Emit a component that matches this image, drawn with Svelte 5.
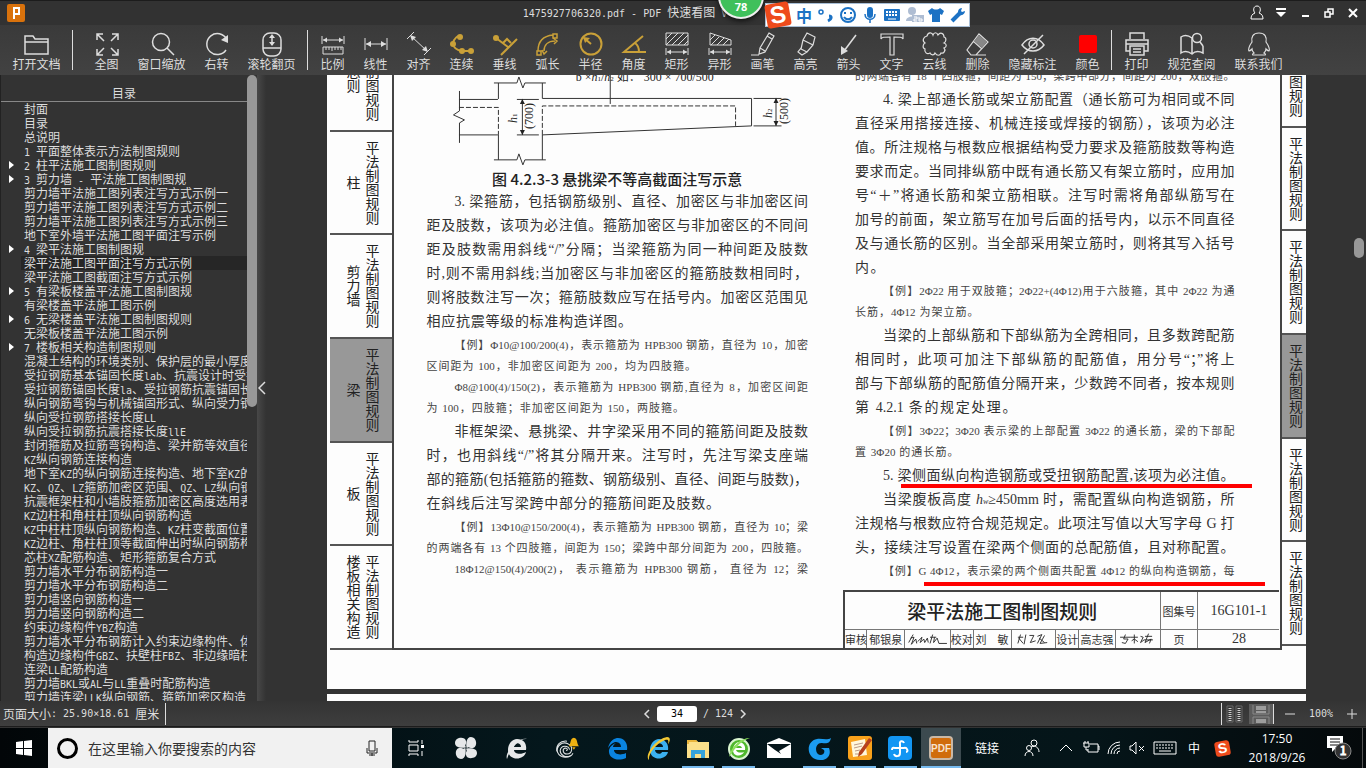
<script>
  const tools = [
    { label: "打开文档", icon: '<path d="M1 23V5h8l2 3h13v15zM1 11h23"/>' },
    { sep: "wide" },
    { label: "全图", icon: '<path d="M10 10L3 3m0 6V3h6M17 10l7-7m-6 0h6v6M10 17l-7 7m0-6v6h6M17 17l7 7m-6 0h6v-6"/>' },
    { label: "窗口缩放", icon: '<circle cx="12" cy="11" r="8.5"/><path d="M18 17l7 7"/>' },
    { label: "右转", icon: '<path d="M22 19a10.500 10.500 0 1 1 .5-11"/><path d="M24 4v8l-7-3z" fill="#ddd" stroke="none"/>' },
    { label: "滚轮翻页", icon: '<rect x="4" y="2" width="18" height="23" rx="7"/><path d="M4 17h18M13 5v9"/><path d="M10 7l3-4 3 4zM10 11l3 4 3-4z" fill="#ddd" stroke="none"/>' },
    { sep: "thin" },
    { label: "比例", icon: '<path d="M2 5v8M24 5v8M3 9h20" stroke-width="1"/><path d="M3 9l4-2.500v5zM23 9l-4-2.500v5z" fill="#ddd" stroke="none"/><path d="M3 16h20v7H3zM6 16v3M9 16v3M12 16v4M15 16v3M18 16v3M21 16v3" stroke-width="1"/>' },
    { label: "线性", icon: '<path d="M2 7v12M24 7v12M3 13h20" stroke-width="1"/><path d="M3 13l5-3v6zM23 13l-5-3v6z" fill="#ddd" stroke="none"/>' },
    { label: "对齐", icon: '<path d="M1 8l7-7M18 24l7-7M5 5l16 15" stroke-width="1"/><path d="M4 4l6 2-4 4zM22 21l-6-2 4-4z" fill="#ddd" stroke="none"/>' },
    { label: "连续", gold: true, icon: '<path d="M9 5c-7 5-7 13 4 15h10"/><g fill="#c9a038" stroke="none"><circle cx="11" cy="6" r="3"/><circle cx="4" cy="13" r="3"/><circle cx="13" cy="20" r="3"/><circle cx="22" cy="20" r="3"/></g>' },
    { label: "垂线", gold: true, icon: '<path d="M4 7l12 9M9 24L25 8M11 12l4-4 4 4"/><circle cx="4" cy="7" r="3" fill="#c9a038" stroke="none"/>' },
    { label: "弧长", gold: true, icon: '<path d="M3 20c0-10 5-15 15-16M9 20c0-6 4-10 11-10M2 20h4v4H2zM18 3h4v4h-4zM7 19l2 4 3-3M18 7l4 3-3 3" stroke-width="1.500"/>' },
    { label: "半径", gold: true, icon: '<circle cx="13" cy="13" r="10.500"/><path d="M13 13L6 7"/><path d="M5 6l7 1-5 5z" fill="#c9a038" stroke="none"/>' },
    { label: "角度", gold: true, icon: '<path d="M22 5L3 21h22M14 12c3 2 4 5 4 9"/>' },
    { label: "矩形", icon: '<path d="M2 2h22v12H2zM2 8l6-6M2 14L14 2M8 14L20 2M14 14L24 4M20 14l4-4M2 17v7M24 17v7M3 21h20" stroke-width="1"/><path d="M3 21l4-2.500v5zM23 21l-4-2.500v5z" fill="#ddd" stroke="none"/>' },
    { label: "异形", icon: '<path d="M3 2l21 7v5H3zM3 9l5-5M4 14l8-8M10 14l7-7M16 14l6-6M2 17v7M24 17v7M3 21h20" stroke-width="1"/><path d="M3 21l4-2.500v5zM23 21l-4-2.500v5z" fill="#ddd" stroke="none"/>' },
    { label: "画笔", icon: '<path d="M19 2l5 3-9 16-6 2 1-6zM17 5l5 3M10 17l5 3M1 24h8" stroke-width="1.200"/>' },
    { label: "高亮", icon: '<path d="M14 2l8 4-2 8-6 7-6-3 2-9zM10 9l10 5M8 17l-3 4 4 3 5-3" stroke-width="1.200"/>' },
    { label: "箭头", icon: '<path d="M20 4L8 20"/><path d="M5 24V15l7 5z" fill="#ddd" stroke="none"/>' },
    { label: "文字", icon: '<path d="M2 8V3h22v5c-1-2-3-2-9-2v18h-4V6C5 6 3 6 2 8z" stroke-width="1.200"/>' },
    { label: "云线", icon: '<path d="M5 5c1-4 5-4 6-1 1-3 4-3 5 0 2-3 6-2 6 2 3 1 2 5 0 6 3 1 3 4 0 5 2 2 0 6-3 5-1 3-4 3-6 0-1 3-4 2-5 0-3 2-6-1-5-4-3-1-2-5 0-6-3-2-2-6 2-7z" stroke-width="1.200"/>' },
    { label: "删除", icon: '<path d="M14 3l9 8-12 13H6l-4-5zM8 10l9 8M11 24h10" stroke-width="1.200"/><path d="M14 4l8 7-5 6-8-7z" fill="#888" stroke="none"/>' },
    { label: "隐藏标注", icon: '<path d="M2 14c6-9 16-9 22 0-6 8-16 8-22 0zM4 23L23 4"/><circle cx="13" cy="13" r="4"/>' },
    { label: "颜色", icon: '<rect x="4" y="4" width="18" height="18" rx="2" fill="#f00" stroke="none"/>' },
    { sep: "thin" },
    { label: "打印", icon: '<path d="M6 8V2h14v6M6 20H2V9h22v11h-4M2 13h22M6 15h14v9H6zM9 18h8M9 21h8"/>' },
    { label: "规范查阅", icon: '<path d="M13 7C9 4 5 4 2 6v16c3-2 7-2 11 1 3-3 7-3 11-1v-7M13 7v15"/><circle cx="18" cy="7" r="4.500"/><path d="M21 11l3 4"/>' },
    { label: "联系我们", icon: '<path d="M13 2c-6 0-8 4-7 9-3 4-4 8-3 9 1 0 2-1 3-2 0 2 1 3 2 4-2 1-2 2 0 2h10c2 0 2-1 0-2 1-1 2-2 2-4 1 1 2 2 3 2 1-1 0-5-3-9 1-5-1-9-7-9z" stroke-width="1.200"/>' }
  ];

  const toc = [
    "封面", "目录", "总说明", "1 平面整体表示方法制图规则", ">2 柱平法施工图制图规则",
    ">3 剪力墙 - 平法施工图制图规", "剪力墙平法施工图列表注写方式示例一",
    "剪力墙平法施工图列表注写方式示例二", "剪力墙平法施工图列表注写方式示例三",
    "地下室外墙平法施工图平面注写示例", ">4 梁平法施工图制图规", "梁平法施工图平面注写方式示例",
    "梁平法施工图截面注写方式示例", ">5 有梁板楼盖平法施工图制图规", "有梁楼盖平法施工图示例",
    ">6 无梁楼盖平法施工图制图规则", "无梁板楼盖平法施工图示例", ">7 楼板相关构造制图规则",
    "混凝土结构的环境类别、保护层的最小厚度", "受拉钢筋基本锚固长度lab、抗震设计时受拉",
    "受拉钢筋锚固长度la、受拉钢筋抗震锚固长度", "纵向钢筋弯钩与机械锚固形式、纵向受力钢筋",
    "纵向受拉钢筋搭接长度LL", "纵向受拉钢筋抗震搭接长度llE", "封闭箍筋及拉筋弯钩构造、梁并筋等效直径",
    "KZ纵向钢筋连接构造", "地下室KZ的纵向钢筋连接构造、地下室KZ的箍", "KZ、QZ、LZ箍筋加密区范围、QZ、LZ纵向钢筋",
    "抗震框架柱和小墙肢箍筋加密区高度选用表", "KZ边柱和角柱柱顶纵向钢筋构造", "KZ中柱柱顶纵向钢筋构造、KZ柱变截面位置",
    "KZ边柱、角柱柱顶等截面伸出时纵向钢筋构造", "芯柱XZ配筋构造、矩形箍筋复合方式",
    "剪力墙水平分布钢筋构造一", "剪力墙水平分布钢筋构造二", "剪力墙竖向钢筋构造一", "剪力墙竖向钢筋构造二",
    "约束边缘构件YBZ构造", "剪力墙水平分布钢筋计入约束边缘构件、体积", "构造边缘构件GBZ、扶壁柱FBZ、非边缘暗柱",
    "连梁LL配筋构造", "剪力墙BKL或AL与LL重叠时配筋构造", "剪力墙连梁LLK纵向钢筋、箍筋加密区构造"
  ];

  // latin letters and digits get their own half-width font
  const runs = text => text.split(/([\x20-\x7e×]+)/).filter(Boolean);
  const isLatin = run => /^[\x20-\x7e×]/.test(run);

  const tabs = [
    { name: "总则" }, { name: "柱" }, { name: "剪力墙" },
    { name: "梁", current: true }, { name: "板" }, { name: "楼板相关构造" }
  ];

  // column widths of the title block, as shares of the row
  const cells = [23, 38, 46, 23, 38, 45, 23, 37, 45, 38, 82];
  const total = cells.reduce((a, b) => a + b);

  // in: first line of a paragraph, end: room left at the line's right side
  const left = [
    { lines: [
      { t: "3. 梁箍筋，包括钢筋级别、直径、加密区与非加密区间", in: true },
      { t: "距及肢数，该项为必注值。箍筋加密区与非加密区的不同间" },
      { t: "距及肢数需用斜线“/”分隔；当梁箍筋为同一种间距及肢数" },
      { t: "时,则不需用斜线;当加密区与非加密区的箍筋肢数相同时，" },
      { t: "则将肢数注写一次；箍筋肢数应写在括号内。加密区范围见" },
      { t: "相应抗震等级的标准构造详图。", end: 176 }
    ] },
    { small: true, lines: [
      { t: "【例】Φ10@100/200(4)，表示箍筋为 HPB300 钢筋，直径为 10，加密", in: true },
      { t: "区间距为 100，非加密区间距为 200，均为四肢箍。", end: 112 },
      { t: "Φ8@100(4)/150(2)，表示箍筋为 HPB300 钢筋,直径为 8，加密区间距", in: true },
      { t: "为 100，四肢箍；非加密区间距为 150，两肢箍。", end: 124 }
    ] },
    { lines: [
      { t: "非框架梁、悬挑梁、井字梁采用不同的箍筋间距及肢数", in: true },
      { t: "时，也用斜线“/”将其分隔开来。注写时，先注写梁支座端" },
      { t: "部的箍筋(包括箍筋的箍数、钢筋级别、直径、间距与肢数)，" },
      { t: "在斜线后注写梁跨中部分的箍筋间距及肢数。", end: 88 }
    ] },
    { small: true, lines: [
      { t: "【例】13Φ10@150/200(4)，表示箍筋为 HPB300 钢筋，直径为 10；梁", in: true },
      { t: "的两端各有 13 个四肢箍，间距为 150；梁跨中部分间距为 200，四肢箍。" },
      { t: "18Φ12@150(4)/200(2)， 表示箍筋为 HPB300 钢筋， 直径为 12；梁", in: true }
    ] }
  ];

  const right = [
    { small: true, lines: [
      { t: "的两端各有 18 个四肢箍，间距为 150；梁跨中部分，间距为 200，双肢箍。" }
    ] },
    { lines: [
      { t: "4. 梁上部通长筋或架立筋配置（通长筋可为相同或不同", in: true },
      { t: "直径采用搭接连接、机械连接或焊接的钢筋），该项为必注" },
      { t: "值。所注规格与根数应根据结构受力要求及箍筋肢数等构造" },
      { t: "要求而定。当同排纵筋中既有通长筋又有架立筋时，应用加" },
      { t: "号“＋”将通长筋和架立筋相联。注写时需将角部纵筋写在" },
      { t: "加号的前面，架立筋写在加号后面的括号内，以示不同直径" },
      { t: "及与通长筋的区别。当全部采用架立筋时，则将其写入括号" },
      { t: "内。", end: 350 }
    ] },
    { small: true, lines: [
      { t: "【例】2Φ22 用于双肢箍；2Φ22+(4Φ12)用于六肢箍，其中 2Φ22 为通", in: true },
      { t: "长筋，4Φ12 为架立筋。", end: 256 }
    ] },
    { lines: [
      { t: "当梁的上部纵筋和下部纵筋为全跨相同，且多数跨配筋", in: true },
      { t: "相同时，此项可加注下部纵筋的配筋值，用分号“；”将上" },
      { t: "部与下部纵筋的配筋值分隔开来，少数跨不同者，按本规则" },
      { t: "第 4.2.1 条的规定处理。", end: 218 }
    ] },
    { small: true, lines: [
      { t: "【例】3Φ22；3Φ20 表示梁的上部配置 3Φ22 的通长筋，梁的下部配", in: true },
      { t: "置 3Φ20 的通长筋。", end: 276 }
    ] },
    { lines: [
      { t: "5. 梁侧面纵向构造钢筋或受扭钢筋配置,该项为必注值。", in: true, mark: "item" },
      { t: "当梁腹板高度 <i>h<small>w</small></i>≥450mm 时，需配置纵向构造钢筋，所", in: true },
      { t: "注规格与根数应符合规范规定。此项注写值以大写字母 G 打" },
      { t: "头，接续注写设置在梁两个侧面的总配筋值，且对称配置。" }
    ] },
    { small: true, lines: [
      { t: "【例】G 4Φ12，表示梁的两个侧面共配置 4Φ12 的纵向构造钢筋，每", in: true, mark: "example" }
    ] }
  ];

  const apps = [
    { name: "Edge", icon: '<path d="M3 12C5 4 10 2 13 2c7 0 10 6 9 12H9c0 4 6 6 12 3v5C12 26 3 22 4 14c1-4 4-6 7-7-2 1-3 3-3 4h8c0-4-3-5-6-5-3 1-5 3-7 6z" fill="#0a84e0"/>' },
    { name: "Internet Explorer", icon: '<path d="M13 3c6 0 10 5 9 11H9c0 4 6 5 7 2h6c-2 9-18 9-18-2C4 8 8 3 13 3zm-4 8h8c0-5-8-5-8 0z" fill="#3bb1f0"/><path d="M3 24C-2 20 9 3 21 1c5 0 2 6 1 7 1-4 0-5-3-4C9 8 2 19 3 24z" fill="#f4c934"/>' },
    { name: "文件资源管理器", open: true, icon: '<path d="M1 4h9l2 2h11v16H1z" fill="#fbe08a"/><path d="M1 4h9l2 2H3v2H1z" fill="#e9b53c"/><path d="M5 22v-8h14v8h-4v-4H9v4z" fill="#35a3dc"/>' },
    { name: "360浏览器", open: true, icon: '<circle cx="12" cy="13" r="10" fill="#4fb82d" stroke="#d9f5cf" stroke-width="2"/><path d="M12 6c4 0 7 4 6 8H9c1 3 5 3 8 2-2 5-11 5-11-2 0-4 3-8 6-8zm-3 6h6c-1-3-5-3-6 0z" fill="#fff"/><path d="M2 21C4 10 14 2 23 2c-7 2-13 7-21 19z" fill="#8be05b"/>' },
    { name: "邮件", icon: '<path d="M0 7l12-5 12 5v15H0z" fill="#fff"/><path d="M0 8h24l-12 7 2 3-6-4z" fill="#06161b"/>' },
    { name: "浏览器", open: true, icon: '<path d="M24 2c-1 5-4 6-9 5-7-1-8 11-2 12 4 0 5-3 4-5l-3-2h8c3 8-3 13-9 12C-1 24-2 5 10 3c5-1 9 2 14-1z" fill="#1b9bf0"/>' },
    { name: "记事本", open: true, icon: '<rect width="24" height="24" rx="3" fill="#f9a11b"/><path d="M3 6l14-3 2 16-14 2z" fill="#fff7dc"/><path d="M6 9l9-2M6 12l8-2M7 15l5-1M7 18h4" stroke="#b98"/><path d="M21 2L11 16l-1 5 4-3L24 4z" fill="#b5401c"/>' },
    { name: "同步", open: true, icon: '<rect width="24" height="24" rx="4" fill="#1296f3"/><path d="M16 7c-1-3-5-2-4 1v9c0 4-5 4-6 1M4 14c0-3 2-2 4-2h8c3-1 5 4 2 4" fill="none" stroke="#fff" stroke-width="2"/>' },
    { name: "PDF 快速看图", open: true, active: true, icon: '<rect x="1" y="1" width="22" height="22" rx="3" fill="#d06c0c" stroke="#c9b8a6" stroke-width="2"/><text x="12" y="16" text-anchor="middle" font-size="10" font-weight="700" fill="#f7e3cf">PDF</text>' }
  ];
</script>

{#snippet half(text)}
  {#each runs(text) as run}<span class:latin={isLatin(run)}>{run}</span>{/each}
{/snippet}

{#snippet prose(groups)}
  {#each groups as group}
    <div class="group" class:little={group.small}>
      {#each group.lines as line}
        <p class={line.mark} class:indent={line.in} style:padding-right={line.end ? `${line.end}px` : null}>{@html line.t}</p>
      {/each}
    </div>
  {/each}
{/snippet}

<div class="app">
  <header class="titlebar">
    <svg class="logo" viewBox="0 0 18 18"><rect width="18" height="18" rx="2" fill="#d9720c" /><path d="M7 15V4h5v6H7" fill="none" stroke="#fff" stroke-width="2" /></svg>
    <h1>{@render half("1475927706320.pdf - PDF 快速看图 V")}</h1>
    <div class="window-buttons">
      <button aria-label="用户"><svg viewBox="0 0 16 16"><path d="M8 1c-4 0-4 5-2 7-3 1-4 3-4 6h12c0-3-1-5-4-6 2-2 2-7-2-7z" stroke-width="1" /></svg></button>
      <button aria-label="菜单"><svg viewBox="0 0 16 16"><path d="M3 4h10" stroke-width="2" /><path d="M3 7h10l-5 5z" fill="#fff" stroke="none" /></svg></button>
      <button aria-label="最小化"><svg viewBox="0 0 16 16"><path d="M5 11h7" stroke-width="2" /></svg></button>
      <button aria-label="还原"><svg viewBox="0 0 16 16"><path d="M4 7h5v5H4zM7 7V4h5v5H9" stroke-width="1.5" /></svg></button>
      <button aria-label="关闭"><svg viewBox="0 0 16 16"><path d="M4 4l8 8M12 4l-8 8" stroke-width="2" /></svg></button>
    </div>
  </header>

  <div class="ball">78</div>
  <div class="ime">
    <span class="sogou">S</span>
    <b>中</b>
    <svg viewBox="0 0 20 20"><circle cx="5" cy="7" r="2" stroke-width="1.500" /><path d="M13 11c3 0 3 3-1 5" stroke-width="3" /></svg>
    <svg viewBox="0 0 20 20"><circle cx="10" cy="10" r="7" /><path d="M7 7v2M13 7v2M6 12c2 3 6 3 8 0" /></svg>
    <svg viewBox="0 0 20 20"><rect x="8" y="3" width="4" height="9" rx="2" fill="#1c72c4" /><path d="M5 9c0 7 10 7 10 0M10 14v4" stroke-width="1.500" /></svg>
    <svg viewBox="0 0 20 20"><rect x="2" y="4" width="16" height="12" rx="1" fill="#1c72c4" stroke="none" /><path d="M4 7h12M4 10h12" stroke="#fff" stroke-dasharray="2 1" /><path d="M6 14h8" stroke="#fff" stroke-width="1" /></svg>
    <svg viewBox="0 0 20 20"><g fill="#aebdd3" stroke="none"><circle cx="8" cy="6" r="4" /><path d="M2 16c0-6 12-6 12 0z" /><rect x="8" y="10" width="12" height="7" /></g><path d="M10 12h3v2h-3v2h3M15 12v4h3v-2h-3" stroke="#fff" stroke-width="1" /></svg>
    <svg viewBox="0 0 20 20"><path d="M6 3c2 2 6 2 8 0l4 3-2 4-2-1v8H6V9l-2 1-2-4z" fill="#1c72c4" stroke="none" /></svg>
    <svg viewBox="0 0 20 20"><path d="M4 16l8-8" stroke-width="4" /><path d="M14 3c-4 0-5 4-3 7 3 1 6-1 6-4l-3 1-1-1z" fill="#1c72c4" stroke="none" /></svg>
  </div>

  <nav class="toolbar">
    {#each tools as tool}
      {#if tool.sep}
        <i class="sep {tool.sep}"></i>
      {:else}
        <button class:long={tool.label.length > 2}>
          <svg class:gold={tool.gold} viewBox="0 0 26 26">{@html tool.icon}</svg>
          {tool.label}
        </button>
      {/if}
    {/each}
  </nav>

  <main>
    <aside>
      <h2>目录</h2>
      <ul>
        {#each toc as entry, i}
          <li class:parent={entry[0] === ">"} class:selected={i === 11}>
            <a href="#toc-{i}">{@render half(entry.replace(">", ""))}</a>
          </li>
        {/each}
      </ul>
    </aside>
    <div class="track"><i></i></div>
    <button class="fold" aria-label="收起目录"><svg viewBox="0 0 8 14"><path d="M7 1L1 7l6 6" fill="none" stroke="#ddd" stroke-width="1.500" /></svg></button>

    <section class="viewer">
      <article class="sheet">
        <div class="tabs">
          {#each tabs as tab}
            <div class="tab" class:current={tab.current}><span>{tab.name}</span><span>平法制图规则</span></div>
          {/each}
        </div>
        <div class="frame">
          <div class="column">
            <svg class="beam" viewBox="427 61 382 107">
              <g fill="none" stroke="#333">
                <path d="M459.500 91v20l-6 4 11 5-5 3v20M459 99.500h39M459 135h39" />
                <path d="M498.500 99V83M494 83h23l2-6 4 11 2-5h21M542.500 83v15.500H752V126L542.500 135M498.500 135v25M542.500 135v25M494 160h23l2-6 4 11 2-5h21" />
                <path d="M459 107.500h39.500V135M542.500 135v-29H736v20" stroke-dasharray="5 2" />
                <path d="M522.500 99v36M517 99.500h22M517 135h22M776.500 98v28M754 98.500h28M754 126h28M610.500 74v30" />
              </g>
              <path d="M520 104l2.500-5 2.500 5zM520 130l2.500 5 2.500-5zM774 103l2.500-5 2.500 5zM774 121l2.500 5 2.500-5z" fill="#222" />
              <text x="576" y="81"><tspan>b × </tspan><tspan font-style="italic">h</tspan><tspan font-size="7">1</tspan>/<tspan font-style="italic">h</tspan><tspan font-size="7">2</tspan> 如： 300 × 700/500</text>
              <text transform="translate(517 123) rotate(-90)"><tspan font-style="italic">h</tspan><tspan font-size="7">1</tspan></text>
              <text transform="translate(533 129) rotate(-90)">(700)</text>
              <text transform="translate(772 118) rotate(-90)"><tspan font-style="italic">h</tspan><tspan font-size="7">2</tspan></text>
              <text transform="translate(789 124) rotate(-90)">(500)</text>
            </svg>
            <h3>图 4.2.3-3 悬挑梁不等高截面注写示意</h3>
            {@render prose(left)}
          </div>
          <div class="column titled">
            <div class="prose">{@render prose(right)}</div>
            <table>
              <colgroup>
                {#each cells as w}<col style:width="{w / total * 100}%" />{/each}
              </colgroup>
              <tbody>
                <tr class="head"><th colspan="9">梁平法施工图制图规则</th><td>图集号</td><td class="big">16G101-1</td></tr>
                <tr>
                  <td>审核</td><td>郁银泉</td>
                  <td><svg viewBox="0 0 46 18"><path d="M2 13l5-9M4 8l4-1-3 8 5-6 1 5M12 12l5-5-2 6 4-4 1 4 3-5 1 5M26 7h7M29 4l-3 10M31 7l-1 6 4-5 2 6h9" /></svg></td>
                  <td>校对</td><td>刘　敏</td>
                  <td><svg viewBox="0 0 46 18"><path d="M5 7h6M8 4L5 14M6 8l5 6M14 4l-2 11M18 5h5l-4 8 6-2M27 6l5-2-5 10M29 8l6 5M35 5l-5 9 8-1" /></svg></td>
                  <td>设计</td><td>高志强</td>
                  <td><svg viewBox="0 0 46 18"><path d="M3 7h12M9 4L7 9h5l-3 5-4-1M15 7h8M19 4v10M16 11l3-2 4 3M26 6l3 1-3 6 4-3M31 6h8M35 3l-4 10 7-4-2 5M30 10h10" /></svg></td>
                  <td>页</td><td class="big">28</td>
                </tr>
              </tbody>
            </table>
          </div>
        </div>
        <div class="tabs outer">
          {#each tabs as tab}
            <div class="tab" class:current={tab.current}><span>平法制图规则</span></div>
          {/each}
        </div>
      </article>
      <div class="sheet next"></div>
      <i class="thumb"></i>
    </section>
  </main>

  <footer class="status">
    <span class="size">{@render half("页面大小: 25.90×18.61 厘米")}</span>
    <div class="pager">
      <button aria-label="上一页"><svg viewBox="0 0 8 10"><path d="M6 1L2 5l4 4" /></svg></button>
      <input aria-label="页码" value="34" />
      <span class="latin">/ 124</span>
      <button aria-label="下一页"><svg viewBox="0 0 8 10"><path d="M2 1l4 4-4 4" /></svg></button>
    </div>
    <div class="zoom">
      <button class="double" aria-label="双页"><svg viewBox="0 0 24 20"><path d="M4 2h6v16H4zM13 2h6v16h-6z" stroke="#666" /><path d="M7 4v13M16 4v13" stroke="#ccc" stroke-width="3" stroke-dasharray="1 1" /></svg></button>
      <button class="on" aria-label="连续"><svg viewBox="0 0 24 20"><path d="M4 1v9h16V1M4 20v-7h16v7" stroke="#888" /><path d="M7 3h10M7 5h10M7 8h10M7 16h10M7 18h10" stroke="#ddd" /></svg></button>
      <button class="step" aria-label="缩小"><svg viewBox="0 0 10 10"><path d="M0 5h10" /></svg></button>
      <span class="latin">100%</span>
      <button class="step" aria-label="放大"><svg viewBox="0 0 10 10"><path d="M0 5h10M5 0v10" /></svg></button>
    </div>
  </footer>

  <footer class="taskbar">
    <button class="start" aria-label="开始"><svg viewBox="0 0 16 16"><path d="M0 2l7-1v7H0zM8 1l8-1v8H8zM0 9h7v6l-7-1zM8 9h8v7l-8-1z" fill="#fff" /></svg></button>
    <div class="search">
      <i></i>
      <input aria-label="搜索" placeholder="在这里输入你要搜索的内容" />
      <svg viewBox="0 0 12 18"><path d="M3 2h6v10H3zM1 9v5h10V9M6 14v3M3 16h6" fill="none" stroke="#222" /></svg>
    </div>
    <button class="view" aria-label="任务视图"><svg viewBox="0 0 18 18"><path d="M2 1v2h9V1M2 17v-2h9v2M2 6h9v6H2zM15 1v4M15 12v5" fill="none" stroke="#fff" /><path d="M14 6h3v3h-3z" fill="#fff" /></svg></button>
    <button class="pin" aria-label="四叶草"><svg viewBox="0 0 24 24"><g fill="#e6e8e9"><path id="leaf" d="M11.500 11.500C8 12 1 12 1 7c0-6 10-7 11-2 1 3-2 4 0 6z" /><path d="M11.500 11.500C8 12 1 12 1 7c0-6 10-7 11-2 1 3-2 4 0 6z" transform="rotate(90 12 12)" /><path d="M11.500 11.500C8 12 1 12 1 7c0-6 10-7 11-2 1 3-2 4 0 6z" transform="rotate(180 12 12)" /><path d="M11.500 11.500C8 12 1 12 1 7c0-6 10-7 11-2 1 3-2 4 0 6z" transform="rotate(270 12 12)" /></g></svg></button>
    <button class="pin" aria-label="浏览器"><svg viewBox="0 0 24 24"><path d="M12 3c7 0 10 5 9 11H9c0 4 7 5 12 2-2 9-18 9-18-2C3 8 7 3 12 3zm-3 8h7c0-5-7-5-7 0z" fill="#e6e8e9" /><path d="M2 23C-1 16 14 0 22 3c-7-1-16 8-20 20z" fill="#e6e8e9" /></svg></button>
    <button class="pin" aria-label="提醒"><svg viewBox="0 0 30 28"><path d="M21 20c-4 7-15 6-18-1-2-8 6-13 12-10 7 3 5 12-1 12-5 0-6-6-2-7 3 0 3 3 1 3M18 23c-6 3-12-1-12-6 1-7 10-6 11-1M14 6C6 5 1 11 2 18" fill="none" stroke="#dfe3e4" stroke-width="1.200" /><path d="M16 12c3-3 1-9 6-10 5 1 3 7 6 10zM20 13h4l-2 3z" fill="#eeb111" /></svg></button>
    <div class="apps">
      {#each apps as app}
        <button class:open={app.open} class:active={app.active} aria-label={app.name}>
          <svg viewBox="0 0 24 24">{@html app.icon}</svg>
        </button>
      {/each}
    </div>
    <div class="tray">
      <a class="links" href="#links">链接</a>
      <button class="people" aria-label="人脉"><svg viewBox="0 0 18 18"><circle cx="11" cy="4" r="3" /><circle cx="6" cy="9" r="2.500" /><path d="M2 17c0-6 8-6 8 0M8 8c5-2 8 1 8 5" /></svg></button>
      <button class="up" aria-label="更多"><svg viewBox="0 0 18 18"><path d="M3 12l6-6 6 6" /></svg></button>
      <button class="power" aria-label="电源"><svg viewBox="0 0 18 18"><path d="M8 5h8v8H6v-3M16 7h1v4M1 4h6v4H2V4M4 8v3h2M3 2v2M6 2v2" /></svg></button>
      <button class="wifi" aria-label="网络"><svg viewBox="0 0 18 18"><path d="M3 15A12 12 0 0 1 15 3M6 15a9 9 0 0 1 9-9M9 15a6 6 0 0 1 6-6M12 15a3 3 0 0 1 3-3" /></svg></button>
      <button class="sound" aria-label="音量"><svg viewBox="0 0 18 18"><path d="M2 7h2l4-4v12l-4-4H2zM11 7l5 5M16 7l-5 5" /></svg></button>
      <button class="keys" aria-label="键盘"><svg viewBox="0 0 24 14"><path d="M1 1h22v12H1z" /><path d="M3 4h18M3 7h18" stroke-dasharray="2 1" /><path d="M6 10h12" /></svg></button>
      <span class="lang">中</span>
      <span class="sg"><i class="sogou">S</i></span>
      <time>17:50<br />2018/9/26</time>
      <button class="notes" aria-label="通知"><svg viewBox="0 0 26 26"><path d="M1 1h16v12h-7l-4 4v-4H1z" fill="#fff" stroke="none" /><path d="M4 4h10M4 7h10M4 10h8" stroke="#111" /><circle cx="17" cy="16" r="8" fill="#333" stroke="#888" /><text x="17" y="20" text-anchor="middle" font-size="12" fill="#fff">1</text></svg></button>
      <i class="desktop"></i>
    </div>
  </footer>
</div>

<style>
  :global(body) {
    margin: 0;
  }
  .app {
    position: relative;
    display: flex;
    flex-direction: column;
    height: 100vh;
    overflow: hidden;
    background: #333;
    color: #ddd;
    font: 12px/14px "Noto Sans CJK SC", sans-serif;
  }
  button {
    display: flex;
    align-items: center;
    justify-content: center;
    padding: 0;
    border: 0;
    background: none;
    color: inherit;
    font: inherit;
  }
  a {
    color: inherit;
    text-decoration: none;
  }
  h1, h2, h3, p, ul {
    margin: 0;
    padding: 0;
    font-weight: 400;
  }
  .latin {
    font: 10px/14px "DejaVu Sans Mono", monospace;
    white-space: pre;
  }

  .titlebar {
    display: flex;
    align-items: center;
    height: 25px;
    border-top: 1px solid #1c1c1c;
    box-sizing: border-box;
    background: #323232;
  }
  .logo {
    width: 18px;
    margin-left: 7px;
  }
  h1 {
    flex: 1;
    padding-right: 20px;
    text-align: center;
    font-size: 12px;
  }
  .window-buttons {
    display: flex;
    margin-right: 1px;
  }
  .window-buttons button {
    width: 24px;
  }
  .window-buttons svg {
    width: 16px;
    fill: none;
    stroke: #fff;
  }
  .ball {
    position: absolute;
    top: -27px;
    left: 718px;
    width: 42px;
    height: 42px;
    border: 2px solid #eee;
    border-radius: 50%;
    background: #3fc05b;
    box-shadow: 0 2px 5px #111;
    color: #fff;
    font: bold 11px/64px "Open Sans", sans-serif;
    text-align: center;
  }
  .ime {
    position: absolute;
    top: 3px;
    left: 765px;
    display: flex;
    align-items: center;
    gap: 2px;
    height: 22px;
    padding-right: 1px;
    border: 1px solid #a9bfd6;
    background: #fff;
  }
  .ime svg {
    width: 20px;
    fill: none;
    stroke: #1c72c4;
    stroke-width: 2px;
  }
  .ime b {
    width: 20px;
    margin-left: 2px;
    color: #1c72c4;
    font-size: 16px;
    text-align: center;
  }
  .sogou {
    display: inline-block;
    width: 24px;
    border-radius: 3px;
    background: #ee4b1c;
    color: #fff;
    font: bold 24px/24px "Liberation Sans", sans-serif;
    text-align: center;
    transform: rotate(-10deg);
  }

  .toolbar {
    display: flex;
    height: 50px;
    padding-left: 3px;
    background: linear-gradient(#3a3a3a, #424242);
  }
  .toolbar button {
    flex-direction: column;
    justify-content: flex-start;
    width: 43px;
    padding-top: 6px;
    white-space: nowrap;
  }
  .toolbar .long {
    width: 67px;
  }
  .toolbar svg {
    width: 26px;
    height: 26px;
    fill: none;
    stroke: #ddd;
    stroke-width: 1.5px;
  }
  .toolbar .gold {
    stroke: #c9a038;
    stroke-width: 2px;
  }
  .sep {
    width: 1px;
    height: 40px;
    margin: 5px 3px 0 2px;
    background: #ddd;
  }
  .wide {
    margin-right: 12px;
  }

  main {
    display: flex;
    flex: 1;
    min-height: 0;
  }
  aside {
    display: flex;
    flex-direction: column;
    width: 246px;
    border-left: 1px solid #222;
    white-space: nowrap;
  }
  h2 {
    padding: 11px 0 1px;
    border-bottom: 1px solid #888;
    font-size: 12px;
    text-align: center;
  }
  ul {
    flex: 1;
    min-height: 0;
    overflow: hidden;
    list-style: none;
  }
  li {
    position: relative;
    height: 14px;
    margin-left: 20px;
    padding-left: 3px;
  }
  .parent {
    margin-left: 8px;
    padding-left: 15px;
  }
  .parent::before {
    content: "";
    position: absolute;
    top: 3px;
    left: 0;
    border: solid transparent;
    border-width: 4px 0 4px 5px;
    border-left-color: #fff;
  }
  .selected {
    background: #262626;
  }
  .track {
    width: 10px;
  }
  .track i {
    display: block;
    height: 53%;
    border-radius: 5px;
    background: #989898;
  }
  .fold {
    width: 9px;
    background: linear-gradient(90deg, #484848, #333);
  }
  .fold svg {
    width: 8px;
  }

  .viewer {
    position: relative;
    display: flex;
    flex: 1;
    flex-direction: column;
    align-items: center;
    justify-content: flex-end;
    min-width: 0;
    overflow: hidden;
  }
  .thumb {
    position: absolute;
    top: 163px;
    right: 2px;
    width: 10px;
    height: 20px;
    border-radius: 5px;
    background: #989898;
  }
  .sheet {
    display: flex;
    flex: none;
    width: 89%;
    padding-bottom: 39px;
    background: #fdfdfd;
    color: #333;
    box-sizing: border-box;
  }
  .next {
    height: 7px;
    margin-top: 5px;
    padding: 0;
  }
  .tabs {
    display: flex;
    flex-direction: column;
    width: 65px;
    padding-left: 3px;
    box-sizing: border-box;
  }
  .tab {
    display: flex;
    flex: 1;
    align-items: center;
    justify-content: center;
    gap: 4px;
    padding-left: 4px;
    border-bottom: 2px solid #555;
    box-sizing: border-box;
    color: #222;
    font-size: 14px;
    line-height: 15px;
  }
  .tab span {
    writing-mode: vertical-rl;
  }
  .current {
    background: #989898;
  }
  .outer {
    width: 24px;
    margin: -4px 0 4px;
    padding: 0;
  }
  .frame {
    display: grid;
    flex: 1;
    grid-template-columns: minmax(0, 450fr) minmax(0, 437fr);
    height: 622px;
    border: 2px solid #444;
    box-sizing: border-box;
  }
  .column {
    display: flex;
    flex-direction: column;
    justify-content: flex-end;
    min-height: 0;
    padding: 0 35px 67px 33px;
  }
  .titled {
    padding: 0;
  }
  .prose {
    padding: 0 45px 7px 12px;
  }
  .beam {
    width: 100%;
    overflow: visible;
    font: 12px "Liberation Serif", "Noto Sans CJK SC", serif;
    fill: #222;
  }
  h3 {
    color: #222;
    font-size: 15px;
    font-weight: 500;
    line-height: 22px;
    text-align: center;
  }
  .group {
    font: 14px/24px "Liberation Serif", "Noto Sans CJK SC", serif;
  }
  .little {
    padding: 1px 0;
    color: #444;
    font-size: 11px;
    line-height: 21px;
  }
  p {
    position: relative;
    text-align: justify;
    text-align-last: justify;
    white-space: nowrap;
  }
  p :global(small) {
    font-size: 8px;
    line-height: 8px;
  }
  .indent {
    padding-left: 28px;
  }
  .item::after, .example::after {
    content: "";
    position: absolute;
    right: -18px;
    bottom: 0;
    left: 46px;
    height: 4px;
    background: #f00;
  }
  .example::after {
    right: -31px;
    bottom: -4px;
    left: 69px;
  }
  table {
    width: 100%;
    border-collapse: collapse;
    border-top: 2px solid #444;
    border-left: 2px solid #444;
    table-layout: fixed;
  }
  td, th {
    height: 18px;
    padding: 0;
    border: 1px solid #777;
    font-size: 11px;
    line-height: 16px;
    text-align: center;
    white-space: nowrap;
  }
  tr > :last-child {
    border-right: 0;
  }
  tr:last-child td {
    border-bottom: 0;
  }
  .head td, th {
    height: 37px;
    border-top: 0;
  }
  th {
    color: #222;
    font-size: 19px;
    font-weight: 500;
  }
  .big {
    font: 14px/16px "Liberation Serif", serif;
  }
  td svg {
    display: block;
    width: 100%;
    height: 16px;
    fill: none;
    stroke: #222;
  }

  .status {
    display: flex;
    align-items: center;
    height: 26px;
    border-bottom: 1px solid #1c1c1c;
    box-sizing: border-box;
    background: linear-gradient(#343434, #3e3e3e);
  }
  .status svg {
    flex: none;
    fill: none;
    stroke: #ddd;
  }
  .size {
    display: flex;
    align-items: center;
    flex: 1;
    height: 22px;
    margin-left: 3px;
  }
  .size::after {
    content: "";
    width: 1px;
    height: 22px;
    margin-left: 6px;
    background: #ddd;
  }
  .pager {
    display: flex;
    align-items: center;
    gap: 6px;
    margin-left: 30px;
  }
  .pager svg {
    width: 8px;
    stroke-width: 1.5px;
  }
  .pager input {
    width: 40px;
    height: 16px;
    padding: 0;
    border: 0;
    border-radius: 3px;
    background: #fff;
    color: #000;
    font: 10px "DejaVu Sans Mono", monospace;
    text-align: center;
  }
  .zoom {
    display: flex;
    flex: 1;
    align-items: center;
    justify-content: flex-end;
    padding-right: 9px;
  }
  .zoom button {
    width: 24px;
    height: 20px;
  }
  .zoom .double {
    width: 28px;
    height: 22px;
    border-left: 1px solid #ddd;
  }
  .zoom .on {
    width: 25px;
    margin-right: 11px;
    border-right: 1px solid #ddd;
    background: #5c5c5c;
  }
  .zoom svg {
    width: 24px;
  }
  .zoom .step, .zoom .step svg {
    width: 10px;
  }
  .zoom span {
    margin: 0 14px;
  }

  .taskbar {
    display: flex;
    height: 40px;
    margin-top: 1px;
    background: linear-gradient(90deg, #020608, #04171c 40%, #051519 80%, #05090b);
    color: #fff;
  }
  .start {
    width: 48px;
  }
  .start svg {
    width: 16px;
  }
  .search {
    display: flex;
    align-items: center;
    width: 344px;
    padding: 0 14px 0 9px;
    box-sizing: border-box;
    background: #f1f1f1;
  }
  .search i {
    width: 15px;
    height: 15px;
    border: 3px solid #000;
    border-radius: 50%;
  }
  .search input {
    flex: 1;
    margin-left: 10px;
    padding: 0;
    border: 0;
    background: none;
    font: 14px "Noto Sans CJK SC", sans-serif;
  }
  .search input::placeholder {
    color: #333;
  }
  .search svg {
    width: 12px;
  }
  .view {
    width: 48px;
  }
  .view svg {
    width: 18px;
  }
  .pin {
    width: 51px;
  }
  .pin svg {
    height: 24px;
  }
  .apps {
    display: flex;
    width: 364px;
    margin-left: 4px;
  }
  .apps button {
    position: relative;
    flex: 1;
  }
  .apps svg {
    width: 24px;
    font-family: "Liberation Sans", sans-serif;
  }
  .apps .active {
    background: #3c4a4f;
  }
  .open::after {
    content: "";
    position: absolute;
    right: 4px;
    bottom: 0;
    left: 4px;
    height: 2px;
    background: #76b9ed;
  }
  .active::after {
    right: 0;
    left: 0;
  }
  .tray {
    display: flex;
    align-items: center;
    margin-left: auto;
  }
  .tray svg {
    width: 18px;
    fill: none;
    stroke: #fff;
  }
  .links {
    width: 50px;
    text-align: center;
  }
  .people {
    width: 40px;
  }
  .up {
    width: 28px;
  }
  .power, .sound {
    width: 22px;
  }
  .wifi, .lang {
    width: 24px;
    text-align: center;
  }
  .keys {
    width: 34px;
  }
  .tray .keys svg {
    width: 24px;
  }
  .sg {
    width: 32px;
    text-align: center;
  }
  .sg .sogou {
    width: 15px;
    font-size: 14px;
    line-height: 15px;
  }
  time {
    width: 78px;
    font: 12px/19px "Open Sans", sans-serif;
    text-align: center;
  }
  .notes {
    width: 46px;
  }
  .tray .notes svg {
    width: 26px;
    stroke-width: 1px;
  }
  .desktop {
    width: 4px;
    height: 40px;
    border-left: 1px solid #555;
    box-sizing: border-box;
  }
</style>
